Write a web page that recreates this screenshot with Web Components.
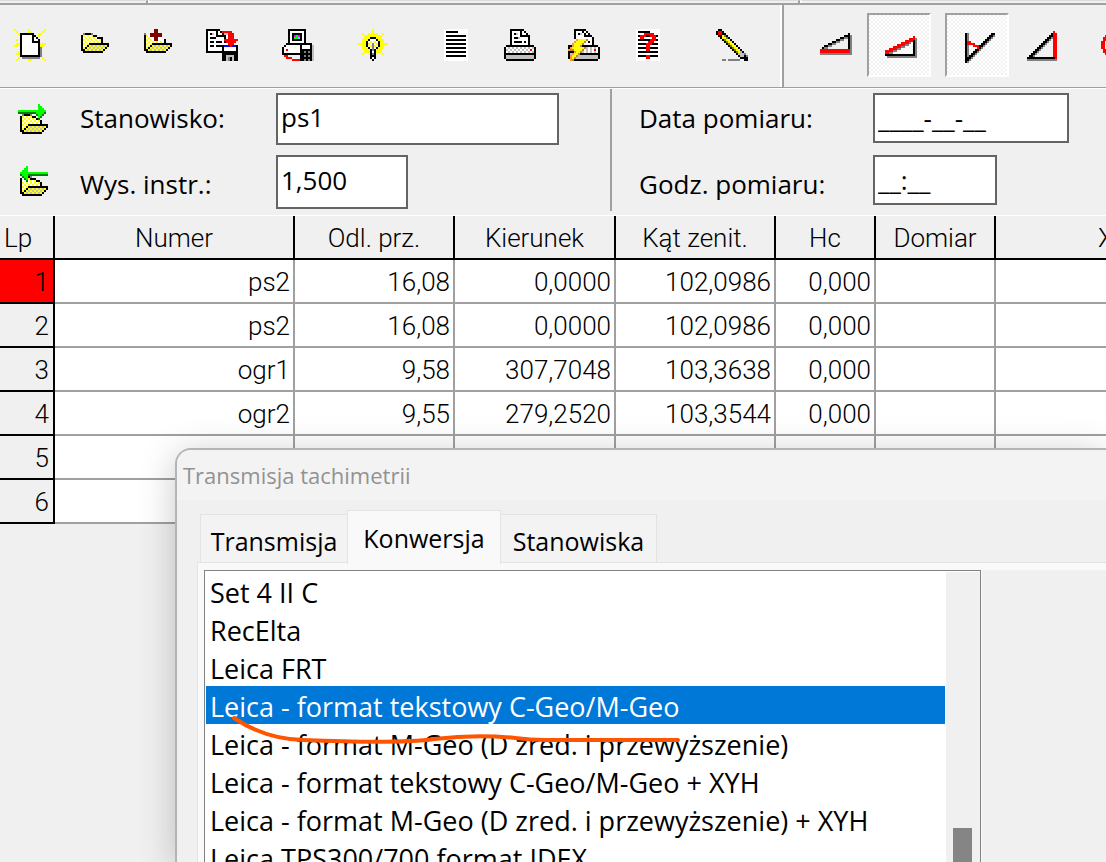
<!DOCTYPE html>
<html lang="pl">
<head>
<meta charset="utf-8">
<meta name="viewport" content="width=device-width, initial-scale=1">
<title>Transmisja tachimetrii</title>
<style>
html, body { margin: 0; height: 100%; overflow: hidden; background: #f0f0f0; }
body { font-family: "Open Sans", "Noto Sans", sans-serif; font-size: 26px; color: #000; }
</style>
</head>
<body>
<survey-app></survey-app>
<script>
/* Bitmap icons: one character for each pixel, drawn as SVG rectangles. */
const PALETTE = { K: '#000', W: '#fff', Y: '#ff0', R: '#f00', M: '#800000', G: '#808080', S: '#c0c0c0', B: '#00f', L: '#0f0', E: '#008000', D: '#808000', P: '#f0f', C: '#0ff', N: '#c08050', O: '#ff9830' };
const FOLDER = ['.GKKKG........', 'KYWYWYKK......', 'KWYWYWYWKKK...', 'KYWYWYWYWYK...', 'KWYWYWYWYWK...', 'KYWYKKKKKKKKKK', 'KWYKYSYSYSYSYK', 'KYKYSYSYSYSYK.', 'KKYSYSYSYSYK..', '.KKKKKKKKKK...'];
const ICONS = {
  new: ['Y......Y.......Y', '.Y.....YY.....Y.', '..YKKKKKKK..YY..', '...KWWWWWKK.Y...', '...KWWWWWKWK....', '.Y.KWWWWWKWWK...', '...KWWWWWKKKK...', '.YYKWWWWWWWWKYYY', 'YY.KWWWWWWWWKYY.', '...KWWWWWWWWKG..', '...KWWWWWWWWKG..', '..YKWWWWWWWWKG..', '.YYKWWWWWWWWKG..', '...KKKKKKKKKKG..', '..Y.GGGGGGGGG.Y.', '.Y.....YY......Y'],
  open: ['', '', ...FOLDER.map(r => '.' + r), '', '', '', ''],
  add: ['......MM........', '......MM........', '.G..MMMMMM......', '.KYWMMMMMM......', '.KWYWWMMWW......', '.KYWYWMMWWWK....', '.KWYWYWYWYWK....', '.KYWYKKKKKKKKKK.', '.KWYKYSYSYSYSYK.', '.KYKYSYSYSYSYK..', '.KKYSYSYSYSYK...', '..KKKKKKKKKK....', '', '', '', ''],
  save: ['KKKKKKK.........', 'KWWWWKWKRRRRR...', 'KWKSWKWWKSSRRR..', 'KWWWWKKKKKWRRR..', 'KWKKKWWWWK.RRR..', 'KWWWWWWWWRRRRRRR', 'KWKKWKKKWKRRRRR.', 'KWWWWWWWWWWRRR..', 'KWKKWKKKKBBBRBBK', 'KWWWWWWWKWWWWWWK', 'KWWWWWWWKWWWWWWK', 'KKKKKKKKKKKKKKKK', '........KKKKKKKK', '........KKSSSSKK', '........KKSGKSKK', '........KKSGKSKK'],
  station: ['...KKKKKKKKK....', '...KWWWWWWWK....', '...KWKKKKKWK....', '...KWKPLPKWK....', '...KWKLLCKWK....', '...KWKKKKKWK....', '...KWWWWWWWK....', '..KKKKKKKKKKKKK.', '.KWWWWWWWKWWWWKS', 'KWWWWWWWWKWWWWKS', 'KWRWWWWWWKKKKKKS', 'KWWWWWWWWKKGKGKS', 'KKKKKKKKKKKKKKKS', '.RR......KKGKGKS', '..RRR....KKKKKKS', '.....RRRRKKGKGKS'],
  bulb: ['.......Y........', '.......Y........', '..Y..YYYYY..Y...', '...YYYYYYYYY....', '...YYYKKKYYY....', '..YYYKWWWKYYY...', '..YYKWYWYWKYY...', 'YYYYKYWGWYKYYYY.', '..YYKWYGYWKYY...', '..YYYKWGWKYYY...', '...YYYKGKYYY....', '...YYYKWKYYY....', '..Y...KGK...Y...', '......KKK.......', '......KWK.......', '.......K........'],
  text: ['..WWWWWWWWWWWW..', '..WKKKKKKWWWWW..', '..WWWWWWWWWWWW..', '..WKKKKKKKKKKW..', '..WWWWWWWWWWWW..', '..WKKKKKKKKKKW..', '..WWWWWWWWWWWW..', '..WKKKKKKKKKKW..', '..WWWWWWWWWWWW..', '..WKKKKKKKKKKW..', '..WWWWWWWWWWWW..', '..WKKKKKKKKKKW..', '..WWWWWWWWWWWW..', '..WKKKKKKKKKKW..', '..WWWWWWWWWWWW..', '..WWWWWWWWWWWW..'],
  print: ['...KKKKKKK......', '...KWWWWKWK.....', '...KWKSWKWWK....', '...KWWWWKKKKK...', '...KWKKSWWWWK...', '...KWWWWWWWWK...', '...KWKKKKWKWK...', '...KWWWWWWWWK...', '.KKKKKKKKKKKKKK.', 'KWSWSWSWSWSWSWSK', 'KSWSWSWSWSWSWRWK', 'KWSWSWSWSWSWSWSK', 'KKKKKKKKKKKKKKKK', 'KSSSSSSSSSSSSSSK', 'KSSSSSSSSSSSSSSK', '.KKKKKKKKKKKKKK.'],
  quick: ['...KKKKKK.......', '...KWWWKWK......', '...KWKSWKWK.....', '...KWWWWKKKK....', '...KWWWWWWWWK...', '....OYYYYNWWK...', '...OYYYYNWKWK...', '..OYYYYNWWWWK...', 'KKOYYYNKKKKKKKK.', 'KOYYYYYYNSWSWSWK', 'ONNYYYYNWSWSWRWK', 'KKKOYYNSWSWSWSWK', 'KSOYYNKKKKKKKKKK', 'KOYYNSSSSSSSSSSK', 'KOYNSSSSSSSSSSSK', '.ONKKKKKKKKKKKK.'],
  help: ['..WWWWWWWWWWWW..', '..WKKKKKKWWWWW..', '..WWWWRRRRRWWW..', '..WKRRRKKRRRKW..', '..WWRRWWWWRRWW..', '..WKKKKKKRRRKW..', '..WWWWWWRRRWWW..', '..WKKKKRRRKKKW..', '..WWWWWRRWWWWW..', '..WKKKKRRKKKKW..', '..WWWWWRRWWWWW..', '..WKKKKKKKKKKW..', '..WWWWWWWWWWWW..', '..WKKKKRRKKKKW..', '..WWWWWRRWWWWW..', '..WWWWWWWWWWWW..'],
  pencil: ['.KK.............', 'KRRK............', 'KRRKK...........', '.KKYDK..........', '..KYYDK.........', '...KDYYK........', '....KDYYK.......', '.....KDYYK......', '......KDYYK.....', '.......KDYYK....', '........KDYYK...', '.........KDYSK..', '..........KSSSG.', '...........KSSKG', '............KKKK', '...GG.GGGGGG..KK'],
  distance: ['', '', '...............K.', '.............KKKG', '...........KKGGKG', '.........KKGG..KG', '.......KKGG....KG', '.....KKGG......KG', '...KKGG........KG', '..KGG..........KG', '.RRRRRRRRRRRRRRRG', '.RRRRRRRRRRRRRRRG', '.GGGGGGGGGGGGGGGG', '', '', ''],
  slope: ['', '', '', '..............R.', '............RRRG', '..........RRRRKG', '........RRRRG.KG', '......RRRRGG..KG', '....RRRRGG....KG', '..RRRRGG......KG', 'RRRRGG........KG', 'RRGG..........KG', 'KKKKKKKKKKKKKKKG', '.GGGGGGGGGGGGGGG', '', ''],
  angle: ['', '', '.KG...........KK', '.KG..........KKG', '.KG.........KKG.', '.KG........KKG..', '.KRR......KKG...', '.KRRRR...KKG....', '.KG..RRRKKG.....', '.KG....RKG......', '.KG...KKG.......', '.KG..KKG........', '.KG.KKG.........', '.KGKKG..........', '.KKKG...........', '.KKG............', '.KG.............'],
  height: ['', '..............R.', '.............KRR', '............KKRR', '...........KKGRR', '..........KKG.RR', '.........KKG..RR', '........KKG...RR', '.......KKG....RR', '......KKG.....RR', '.....KKG......RR', '....KKG.......RR', '...KKG........RR', '..KKG.........RR', '.KKKKKKKKKKKKKKR', '.GGGGGGGGGGGGGGG'],
  circle: ['', '', '....RRRR....', '..RRRRRRRR..', '.RRR....RRR.', '.RR......RR.', 'RR........RR', 'RR........RR', 'RR........RR', 'RR........RR', '.RR......RR.', '.RRR....RRR.', '..RRRRRRRR..', '....RRRR....', '', ''],
  next: ['..........L.....', '..........LL....', '..........LLL...', 'LLLLLLLLLLLLLL..', 'EEEEEEEEELLLLE..', '..GKKKG..ELLE...', '.KYWYWYKK.LE....', '.KWYWYWYWKE.....', '.KYWYWYWYWYK....', '.KWYWYWYWYWK....', '.KYWYKKKKKKKKKK.', '.KWYKYSYSYSYSYK.', '.KYKYSYSYSYSYK..', '.KKYSYSYSYSYK...', '..KKKKKKKKKK....'],
  previous: ['....L...........', '...LL...........', '..LLL...........', '.LLLLLLLLLLLLLL.', '.ELLLEEEEEEEEEE.', '..ELLKG.........', '.K.ELYKKK.......', '.KW.EWYWYKK.....', '.KYWYWYWYWYK....', '.KWYWYWYWYWK....', '.KYWYKKKKKKKKKK.', '.KWYKYSYSYSYSYK.', '.KYKYSYSYSYSYK..', '.KKYSYSYSYSYK...', '..KKKKKKKKKK....']
};

const define = (name, markup, setup) => {
  const template = document.createElement('template');
  template.innerHTML = markup;
  customElements.define(name, class extends HTMLElement {
    connectedCallback() {
      if (this.shadowRoot) return;
      const root = this.attachShadow({ mode: 'open' });
      root.append(template.content.cloneNode(true));
      if (setup) setup(this, root);
    }
  });
};

define('pixel-icon', `<style>:host{display:block;flex:none}svg{display:block}</style>`, (host, root) => {
  const rows = ICONS[host.getAttribute('name')] || [''];
  const w = Math.max(...rows.map(r => r.length)), h = rows.length;
  let rects = '';
  rows.forEach((row, y) => {
    for (let x = 0; x < row.length;) {
      let end = x + 1;
      while (row[end] === row[x]) end++;
      if (row[x] !== '.') rects += `<rect x="${x}" y="${y}" width="${end - x}" height="1" fill="${PALETTE[row[x]]}"/>`;
      x = end;
    }
  });
  root.innerHTML += `<svg width="${w * 2}" height="${h * 2}" viewBox="0 0 ${w} ${h}" shape-rendering="crispEdges" aria-hidden="true">${rects}</svg>`;
});

define('tool-button', `<style>
:host{display:block;flex:none;width:var(--tool-width,60px);height:64px}
button{display:flex;align-items:center;justify-content:center;box-sizing:border-box;width:100%;height:100%;margin:0;padding:0;border:0;background:none}
:host([pressed]) button{border:2px solid;border-color:#a0a0a0 #fff #fff #a0a0a0;padding:2px 0 0 4px;background:repeating-conic-gradient(#fff 0 25%,#f2f2f2 0 50%) 0 0/4px 4px}
</style><button type="button"></button>`, (host, root) => {
  const button = root.querySelector('button');
  button.setAttribute('aria-label', host.getAttribute('label'));
  if (host.hasAttribute('pressed')) button.setAttribute('aria-pressed', 'true');
  const icon = document.createElement('pixel-icon');
  icon.setAttribute('name', host.getAttribute('icon'));
  button.append(icon);
});

define('top-edge', `<style>
:host{display:flex;height:3px;border-bottom:2px solid #a0a0a0;flex:none}
span{border-top:1px solid #dcdcdc;border-right:2px solid #a0a0a0}
span:first-of-type{flex:0 0 146px}span:nth-of-type(2){flex:0 0 648px;border-left:2px solid #fff}span:last-of-type{flex:1;border-left:2px solid #fff;border-right:0}
</style><span></span><span></span><span></span>`);

define('tool-bar', `<style>
:host{display:flex;align-items:center;height:82px;flex:none;border-bottom:1px solid #a0a0a0;overflow:hidden}
.group{display:flex;gap:4px;margin-right:16px;padding-bottom:2px;flex:none}
.wide{margin-right:22px}.last{margin:0 20px 0 8px}
.modes{--tool-width:64px;display:flex;align-items:center;align-self:stretch;flex:1;border-left:2px solid #a0a0a0;box-shadow:-2px 0 #fff;padding:0 0 2px 19px}
.pair{display:flex;gap:14px}.far{margin-left:8px}
</style>
<div class="group"><tool-button icon="new" label="Nowy"></tool-button><tool-button icon="open" label="Otwórz"></tool-button><tool-button icon="add" label="Dołącz"></tool-button><tool-button icon="save" label="Zapisz"></tool-button></div>
<div class="group"><tool-button icon="station" label="Transmisja"></tool-button></div>
<div class="group wide"><tool-button icon="bulb" label="Wskazówka"></tool-button></div>
<div class="group"><tool-button icon="text" label="Raport"></tool-button><tool-button icon="print" label="Drukuj"></tool-button><tool-button icon="quick" label="Szybki wydruk"></tool-button><tool-button icon="help" label="Pomoc"></tool-button></div>
<div class="group last"><tool-button icon="pencil" label="Edycja"></tool-button></div>
<div class="modes"><tool-button icon="distance" label="Odległość pozioma"></tool-button><div class="pair"><tool-button icon="slope" label="Odległość skośna" pressed></tool-button><tool-button icon="angle" label="Kąt zenitalny" pressed></tool-button></div><tool-button icon="height" label="Przewyższenie"></tool-button><tool-button class="far" icon="circle" label="Okrąg"></tool-button></div>`);

define('form-field', `<style>
:host{display:flex;align-items:flex-start}
label{flex:none;width:var(--label-width,196px);height:52px;line-height:50px;white-space:nowrap}
:host([low]) label{height:54px;line-height:58px}
input{box-sizing:border-box;width:var(--input-width);height:var(--input-height,52px);margin:0;border:2px solid #646464;border-radius:0;background:#fff;padding:0 3px 4px;font:inherit;color:inherit;outline:0}
:host([mask]) input{padding:0 3px}
</style><label for="value"></label><input id="value" type="text">`, (host, root) => {
  root.querySelector('label').textContent = host.getAttribute('label');
  const input = root.querySelector('input');
  input.setAttribute('value', host.getAttribute('value'));
});

define('station-panel', `<style>
:host{display:flex;flex:none;border-top:1px solid #fff;height:126px}
.left,.right{display:grid;align-content:start;row-gap:10px;padding-top:4px}
.left{flex:0 0 610px;grid-template-columns:80px 1fr}
.right{flex:1;border-left:2px solid #a0a0a0;padding-left:27px;margin-bottom:4px;--label-width:234px;--input-height:50px}
tool-button{--tool-width:68px;height:52px}
</style>
<div class="left">
<tool-button icon="next" label="Następne stanowisko"></tool-button><form-field label="Stanowisko:" value="ps1" style="--input-width:283px"></form-field>
<tool-button icon="previous" label="Poprzednie stanowisko"></tool-button><form-field low label="Wys. instr.:" value="1,500" style="--input-width:132px;--input-height:54px"></form-field>
</div>
<div class="right">
<form-field mask label="Data pomiaru:" value="____-__-__" style="--input-width:196px"></form-field>
<form-field mask low label="Godz. pomiaru:" value="__:__" style="--input-width:124px"></form-field>
</div>`);

define('data-grid', `<style>
:host{display:block;flex:none;overflow:hidden;border-top:1px solid #fff;font-family:Roboto,"Liberation Sans",sans-serif;font-weight:350}
table{table-layout:fixed;border-collapse:separate;border-spacing:0;width:1216px;min-width:100%;font-size:26px;line-height:40px}
th,td{box-sizing:border-box;height:44px;padding:2px 0 0;white-space:nowrap;overflow:hidden;font-weight:inherit}
th{border-right:2px solid #000;border-bottom:2px solid #000;background:#f0f0f0;text-align:center}
tbody th{text-align:right;padding-right:4px}
thead th:first-child{text-align:left;padding-left:4px}
thead th:last-child{border-right:0}
td{background:#fff;border-right:2px solid #a0a0a0;border-bottom:2px solid #a0a0a0;padding-right:3px;text-align:right}
td:last-child{border-right:0}
tr.current th{background:#f00}
</style>
<table><colgroup><col style="width:55px"><col style="width:240px"><col style="width:160px"><col style="width:161px"><col style="width:160px"><col style="width:100px"><col style="width:120px"><col></colgroup>
<thead><tr><th scope="col">Lp</th><th scope="col">Numer</th><th scope="col">Odl. prz.</th><th scope="col">Kierunek</th><th scope="col">Kąt zenit.</th><th scope="col">Hc</th><th scope="col">Domiar</th><th scope="col">X</th></tr></thead>
<tbody></tbody></table>`, (host, root) => {
  const data = [
    ['ps2', '16,08', '0,0000', '102,0986', '0,000'],
    ['ps2', '16,08', '0,0000', '102,0986', '0,000'],
    ['ogr1', '9,58', '307,7048', '103,3638', '0,000'],
    ['ogr2', '9,55', '279,2520', '103,3544', '0,000'],
    [], []
  ];
  root.querySelector('tbody').innerHTML = data.map((row, i) => `<tr${i ? '' : ' class="current"'}><th scope="row">${i + 1}</th>${Array.from({ length: 7 }, (_, c) => `<td>${row[c] || ''}</td>`).join('')}</tr>`).join('');
});

define('tab-strip', `<style>
:host{display:flex;align-items:flex-end;padding-left:23px;height:52px;font-size:25px}
button{box-sizing:border-box;height:48px;margin:0;padding:4px 8px 0;border:1px solid #e3e3e3;border-bottom:0;background:#f3f3f3;font:inherit;color:inherit;line-height:44px;white-space:nowrap;text-align:center;width:156px}
button:first-of-type{width:147px;border-right:0}
button:last-of-type{border-left:0}
button[aria-selected=true]{height:54px;width:154px;margin-bottom:-2px;background:#f9f9f9;padding:0 8px;line-height:52px}
</style><button type="button" role="tab">Transmisja</button><button type="button" role="tab" aria-selected="true">Konwersja</button><button type="button" role="tab">Stanowiska</button>`);

define('format-list', `<style>
:host{display:flex;box-sizing:border-box;width:777px;border:1px solid #828282;background:#fff;padding:1px 0 0 1px;position:relative;font-size:27px}
ul{flex:1;margin:0;padding:0;list-style:none}
li{height:38px;line-height:42px;padding-left:4px;white-space:nowrap}
li[aria-selected=true]{background:#0078d7;color:#fff}
.track{flex:none;width:34px;margin-left:1px;background:#f0f0f0;display:flex;flex-direction:column;align-items:center}
.track span{margin:256px 2px 0 0;width:19px;height:60px;background:#858585}
svg{position:absolute;left:23px;top:140px;overflow:visible}
</style>
<ul role="listbox" aria-label="Format">
<li role="option">Set 4 II C</li><li role="option">RecElta</li><li role="option">Leica FRT</li>
<li role="option" aria-selected="true">Leica - format tekstowy C-Geo/M-Geo</li>
<li role="option">Leica - format M-Geo (D zred. i przewyższenie)</li>
<li role="option">Leica - format tekstowy C-Geo/M-Geo + XYH</li>
<li role="option">Leica - format M-Geo (D zred. i przewyższenie) + XYH</li>
<li role="option">Leica TPS300/700 format IDEX</li></ul>
<div class="track"><span></span></div>
<svg width="460" height="40" viewBox="228 711 460 40" fill="none" stroke="#ff5500" stroke-width="4" stroke-linecap="round" aria-hidden="true"><path d="M234 718Q265 739 303 740Q400 744 434 739Q477 734 515 738Q530 740 545 740H678"/></svg>`);

define('app-dialog', `<style>
:host{display:block;box-sizing:border-box;overflow:hidden;border:solid #b4b4b4;border-width:2px 0 0 2px;border-radius:16px 0 0 0;background:#f0f0f0;box-shadow:0 6px 36px rgba(0,0,0,.22)}
h1{margin:0;height:50px;line-height:50px;padding-left:6px;background:#f3f3f3;color:#929292;font-size:22px;font-weight:400}
.strip{padding-top:10px}
.page{margin-left:20px;border-top:1px solid #e3e3e3;border-left:1px solid #e3e3e3;background:linear-gradient(90deg,#f9f9f9 784px,#f0f0f0 784px);padding-left:6px;}
.page::before{content:"";display:block;height:7px;margin-left:-6px;background:#f9f9f9}
</style><h1></h1><div class="strip"><tab-strip></tab-strip></div><div class="page"><slot></slot></div>`, (host, root) => {
  root.querySelector('h1').textContent = host.getAttribute('heading');
});

define('survey-app', `<style>
:host{display:flex;flex-direction:column;position:relative;height:100vh;overflow:hidden}
app-dialog{position:absolute;left:175px;top:448px;right:0;bottom:0}
</style><top-edge></top-edge><tool-bar></tool-bar><station-panel></station-panel><data-grid></data-grid>
<app-dialog heading="Transmisja tachimetrii" role="dialog" aria-label="Transmisja tachimetrii"><format-list></format-list></app-dialog>`);
</script>
</body>
</html>
